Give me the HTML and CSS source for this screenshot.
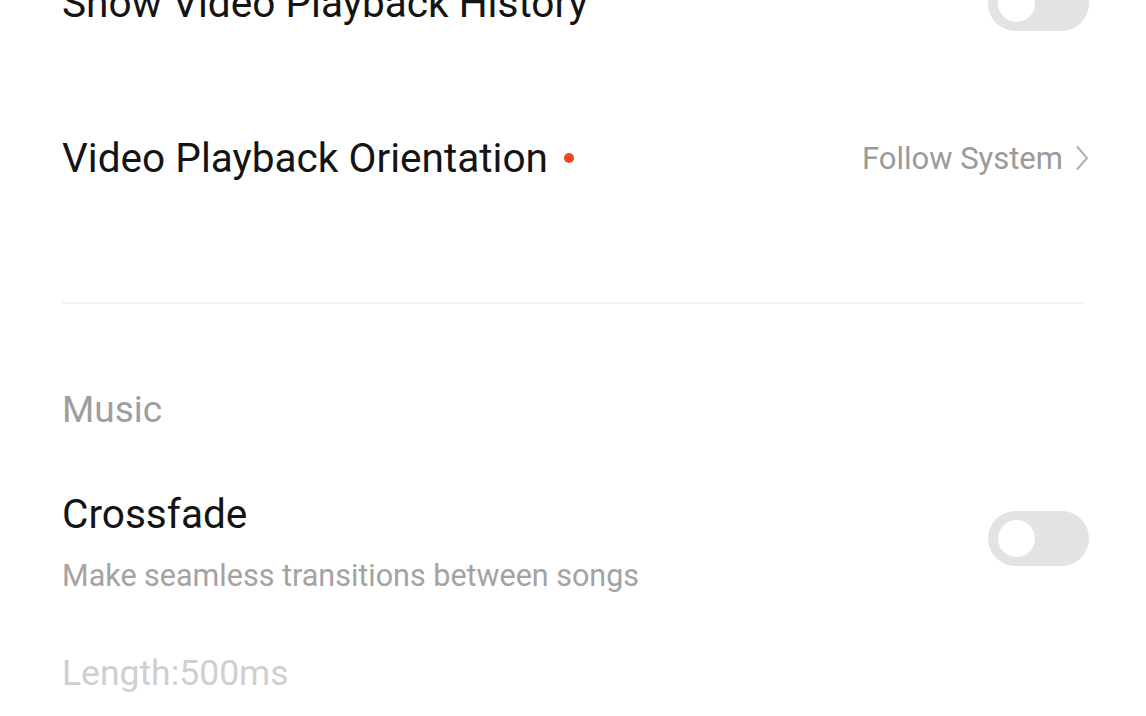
FILE: index.html
```html
<!DOCTYPE html>
<html>
<head>
<meta charset="utf-8">
<link rel="stylesheet" href="styles.css">
</head>
<body>
<div class="page">
  <div class="row row-first">
    <div class="title">Show Video Playback History</div>
    <div class="toggle"><div class="knob"></div></div>
  </div>
  <div class="row row-orient">
    <div class="title">Video Playback Orientation <span class="dot"></span></div>
    <div class="value">Follow System
      <svg class="chev" width="14" height="26" viewBox="0 0 14 26"><path d="M2 1.5 L12 13 L2 24.5" fill="none" stroke="#b0b0b0" stroke-width="2"/></svg>
    </div>
  </div>
  <div class="divider"></div>
  <div class="section-title">Music</div>
  <div class="row row-cross">
    <div class="text">
      <div class="title">Crossfade</div>
      <div class="subtitle">Make seamless transitions between songs</div>
    </div>
    <div class="toggle toggle-cross"><div class="knob"></div></div>
  </div>
  <div class="length">Length:500ms</div>
</div>
</body>
</html>
```
FILE: styles.css
```css
html, body {
  margin: 0;
  padding: 0;
  background: #ffffff;
  overflow: hidden;
}
body {
  font-family: Roboto, "Noto Sans", sans-serif;
  width: 1146px;
  height: 716px;
}
.page {
  margin-top: -52px;
}
.row {
  display: flex;
  align-items: center;
  justify-content: space-between;
  padding: 0 57px 0 62px;
}
.row-first {
  height: 110px;
}
.row-orient {
  height: 200px;
}
.title {
  font-size: 40.6px;
  line-height: 48px;
  color: #141414;
  display: flex;
  align-items: center;
}
.dot {
  display: inline-block;
  width: 10px;
  height: 10px;
  border-radius: 50%;
  background: #f0461c;
  margin-left: 16px;
}
.value {
  font-size: 31px;
  color: #9a9a9a;
  display: flex;
  align-items: center;
  gap: 12px;
}
.chev {
  display: block;
}
.toggle {
  width: 101px;
  height: 55px;
  border-radius: 28px;
  background: #e3e3e3;
  display: flex;
  align-items: center;
  padding-left: 10px;
  box-sizing: border-box;
}
.knob {
  width: 37px;
  height: 37px;
  border-radius: 50%;
  background: #ffffff;
}
.divider {
  height: 2px;
  background: #f3f3f3;
  margin: 44px 62px 0 62px;
}
.section-title {
  font-size: 37px;
  line-height: 44px;
  color: #9e9e9e;
  padding-left: 62px;
  margin-top: 84px;
}
.row-cross {
  margin-top: 58px;
}
.subtitle {
  font-size: 30.5px;
  line-height: 40px;
  color: #a3a3a3;
  margin-top: 18px;
}
.toggle-cross {
  margin-bottom: 9px;
}
.length {
  font-size: 35.5px;
  line-height: 44px;
  color: #cfcfcf;
  padding-left: 62px;
  margin-top: 55px;
}
```
